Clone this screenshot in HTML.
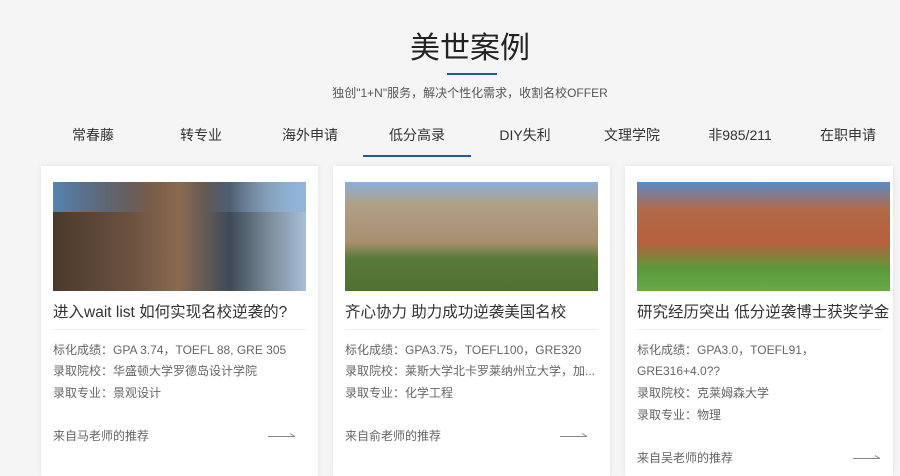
<!DOCTYPE html>
<html><head><meta charset="utf-8"><style>
*{margin:0;padding:0;box-sizing:border-box}
body{width:900px;height:468px;overflow:hidden;background:#f5f5f5;font-family:"Liberation Sans","Noto Sans CJK SC",sans-serif;position:relative;color:#333}
.a{position:absolute;white-space:nowrap}
h1{position:absolute;left:0;width:940px;top:31px;text-align:center;font-size:30px;font-weight:normal;color:#222;line-height:36px}
.ul{position:absolute;left:447px;top:73px;width:50px;height:2px;background:#1f5a9c}
.sub{left:0;width:940px;text-align:center;top:85px;font-size:12px;line-height:16px;color:#555}
.tab{top:126px;font-size:14px;line-height:18px;color:#333;width:108px;text-align:center;margin-left:-54px}
.act{position:absolute;left:363px;top:155px;width:108px;height:2px;background:#1f5a9c}
.card{position:absolute;top:166px;width:277px;height:310px;background:#fff;box-shadow:0 0 6px rgba(0,0,0,.08)}
.img{position:absolute;left:12px;top:16px;width:253px;height:109px}
.t{position:absolute;left:12px;top:137px;font-size:15.5px;line-height:20px;color:#333;white-space:nowrap}
.hr{position:absolute;left:12px;right:12px;top:163px;height:1px;background:#eee}
.l{position:absolute;left:12px;font-size:12px;line-height:16px;color:#666;white-space:nowrap}
.arr{position:absolute;right:22px;width:28px;height:8px}
</style></head><body>
<h1>美世案例</h1><div class="ul"></div>
<div class="a sub">独创"1+N"服务，解决个性化需求，收割名校OFFER</div>
<div class="a tab" style="left:93px">常春藤</div>
<div class="a tab" style="left:201px">转专业</div>
<div class="a tab" style="left:310px">海外申请</div>
<div class="a tab" style="left:417px">低分高录</div>
<div class="a tab" style="left:525px">DIY失利</div>
<div class="a tab" style="left:632px">文理学院</div>
<div class="a tab" style="left:740px">非985/211</div>
<div class="a tab" style="left:848px">在职申请</div>
<div class="act"></div>

<div class="card" style="left:41px">
<div class="img" style="background:linear-gradient(90deg,#4a3a2c 0%,#6b5040 30%,#8a6a50 50%,#3e4a58 70%,#7a8a98 85%,#a8c0d8 100%)"><div style="position:absolute;left:0;right:0;top:0;height:30px;background:linear-gradient(90deg,rgba(90,150,210,.8),rgba(0,0,0,0) 40%,rgba(0,0,0,0) 60%,rgba(140,180,220,.8))"></div></div>
<div class="t">进入wait list 如何实现名校逆袭的?</div><div class="hr"></div>
<div class="l" style="top:176px">标化成绩：GPA 3.74，TOEFL 88, GRE 305</div>
<div class="l" style="top:197px">录取院校：华盛顿大学罗德岛设计学院</div>
<div class="l" style="top:219px">录取专业：景观设计</div>
<div class="l" style="top:262px">来自马老师的推荐</div>
<svg class="arr" style="top:266px" viewBox="0 0 28 8"><path d="M0 4.5H27M22 1.5L27 4.5" stroke="#888" fill="none"/></svg>
</div>

<div class="card" style="left:333px">
<div class="img" style="background:linear-gradient(180deg,#8ab0d8 0%,#b0a088 20%,#a89070 55%,#5a7a3a 70%,#4e7030 100%)"></div>
<div class="t">齐心协力 助力成功逆袭美国名校</div><div class="hr"></div>
<div class="l" style="top:176px">标化成绩：GPA3.75，TOEFL100，GRE320</div>
<div class="l" style="top:197px">录取院校：莱斯大学北卡罗莱纳州立大学，加...</div>
<div class="l" style="top:219px">录取专业：化学工程</div>
<div class="l" style="top:262px">来自俞老师的推荐</div>
<svg class="arr" style="top:266px" viewBox="0 0 28 8"><path d="M0 4.5H27M22 1.5L27 4.5" stroke="#888" fill="none"/></svg>
</div>

<div class="card" style="left:625px;width:268px">
<div class="img" style="width:253px;background:linear-gradient(180deg,#5a8ac8 0%,#b06a48 25%,#b8603c 55%,#5a9a3a 80%,#6aa848 100%)"></div>
<div class="t">研究经历突出 低分逆袭博士获奖学金</div><div class="hr"></div>
<div class="l" style="top:176px">标化成绩：GPA3.0，TOEFL91，</div>
<div class="l" style="top:197px">GRE316+4.0??</div>
<div class="l" style="top:219px">录取院校：克莱姆森大学</div>
<div class="l" style="top:241px">录取专业：物理</div>
<div class="l" style="top:284px">来自吴老师的推荐</div>
<svg class="arr" style="top:288px;right:12px" viewBox="0 0 28 8"><path d="M0 4.5H27M22 1.5L27 4.5" stroke="#888" fill="none"/></svg>
</div>
</body></html>
